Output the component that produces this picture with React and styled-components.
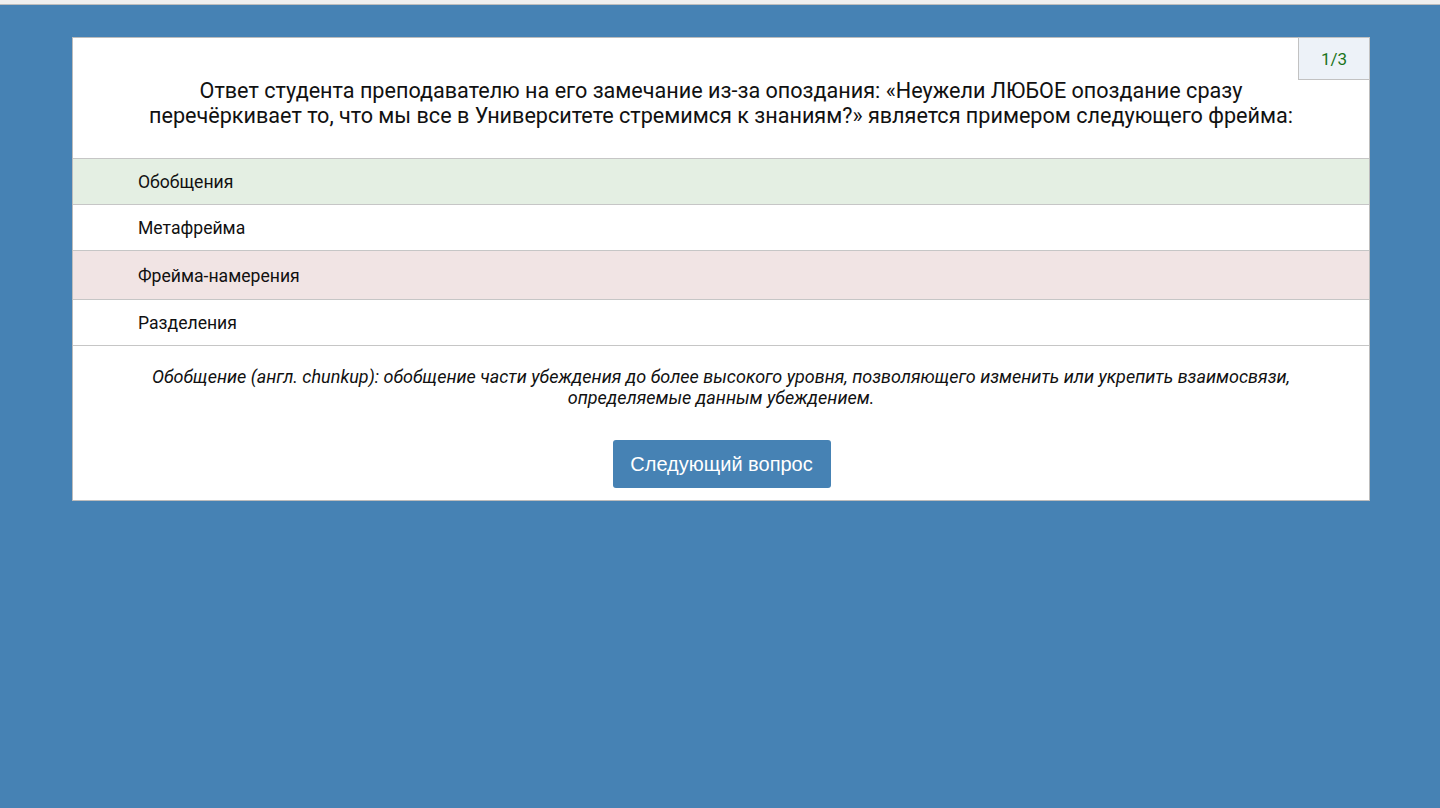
import React from "react";
import styled, { createGlobalStyle } from "styled-components";

const Global = createGlobalStyle`
  html, body { margin: 0; padding: 0; }
  body {
    background: #4682b4;
    font-family: Roboto, "Noto Sans", "DejaVu Sans", sans-serif;
    min-height: 808px;
  }
`;

const TopStrip = styled.div`
  height: 4px;
  background: #efefef;
  border-bottom: 1px solid #bdbdbd;
`;

const Page = styled.div`
  padding: 32px 71px 0 72px;
`;

const Card = styled.section`
  position: relative;
  width: 1296px;
  background: #fff;
  border: 1px solid #bcbcbc;
`;

const Counter = styled.div`
  position: absolute;
  top: -1px;
  right: -1px;
  width: 70px;
  height: 41px;
  display: flex;
  align-items: center;
  justify-content: center;
  background: #edf2f8;
  border: 1px solid #c2c2c2;
  color: #1a741a;
  font-size: 17px;
  font-weight: 400;
`;

const Question = styled.h2`
  margin: 0;
  padding: 40px 55px 30px;
  text-align: center;
  font-size: 21.6px;
  line-height: 25px;
  font-weight: 400;
  color: #111;
`;

const Options = styled.ul`
  list-style: none;
  margin: 0;
  padding: 0;
`;

const Option = styled.li`
  border-top: 1px solid #c6c6c6;
  height: ${(p) => p.$h}px;
  box-sizing: border-box;
  padding: ${(p) => (p.$h > 46 ? 2 : 0)}px 0 0 65px;
  display: flex;
  align-items: center;
  font-size: 17.6px;
  font-weight: 400;
  color: #111;
  background: ${(p) =>
    p.$state === "correct" ? "#e4efe3" : p.$state === "wrong" ? "#f1e4e4" : "#fff"};
  &:last-child { border-bottom: 1px solid #c6c6c6; height: ${(p) => p.$h + 1}px; }
`;

const Explanation = styled.p`
  margin: 0;
  padding: 20px 50px 0;
  text-align: center;
  font-style: italic;
  font-size: 18px;
  font-weight: 400;
  line-height: 21px;
  color: #111;
`;

const Footer = styled.div`
  display: flex;
  justify-content: center;
  padding: 32px 0 12px 1px;
`;

const NextButton = styled.button`
  height: 48px;
  width: 218px;
  border: none;
  border-radius: 3px;
  background: #4682b4;
  color: #fff;
  font-family: "Liberation Sans", Arial, sans-serif;
  font-size: 20px;
  cursor: pointer;
`;

const options = [
  { text: "Обобщения", state: "correct", h: 46 },
  { text: "Метафрейма", state: null, h: 46 },
  { text: "Фрейма-намерения", state: "wrong", h: 49 },
  { text: "Разделения", state: null, h: 46 },
];

export default function App() {
  return (
    <>
      <Global />
      <TopStrip />
      <Page>
        <Card>
          <Counter>1/3</Counter>
          <Question>
            Ответ студента преподавателю на его замечание из-за опоздания: «Неужели ЛЮБОЕ
            опоздание сразу перечёркивает то, что мы все в Университете стремимся к знаниям?»
            является примером следующего фрейма:
          </Question>
          <Options>
            {options.map((o) => (
              <Option key={o.text} $state={o.state} $h={o.h}>
                {o.text}
              </Option>
            ))}
          </Options>
          <Explanation>
            Обобщение (англ. chunkup): обобщение части убеждения до более высокого уровня,
            позволяющего изменить или укрепить взаимосвязи, определяемые данным убеждением.
          </Explanation>
          <Footer>
            <NextButton>Следующий вопрос</NextButton>
          </Footer>
        </Card>
      </Page>
    </>
  );
}
